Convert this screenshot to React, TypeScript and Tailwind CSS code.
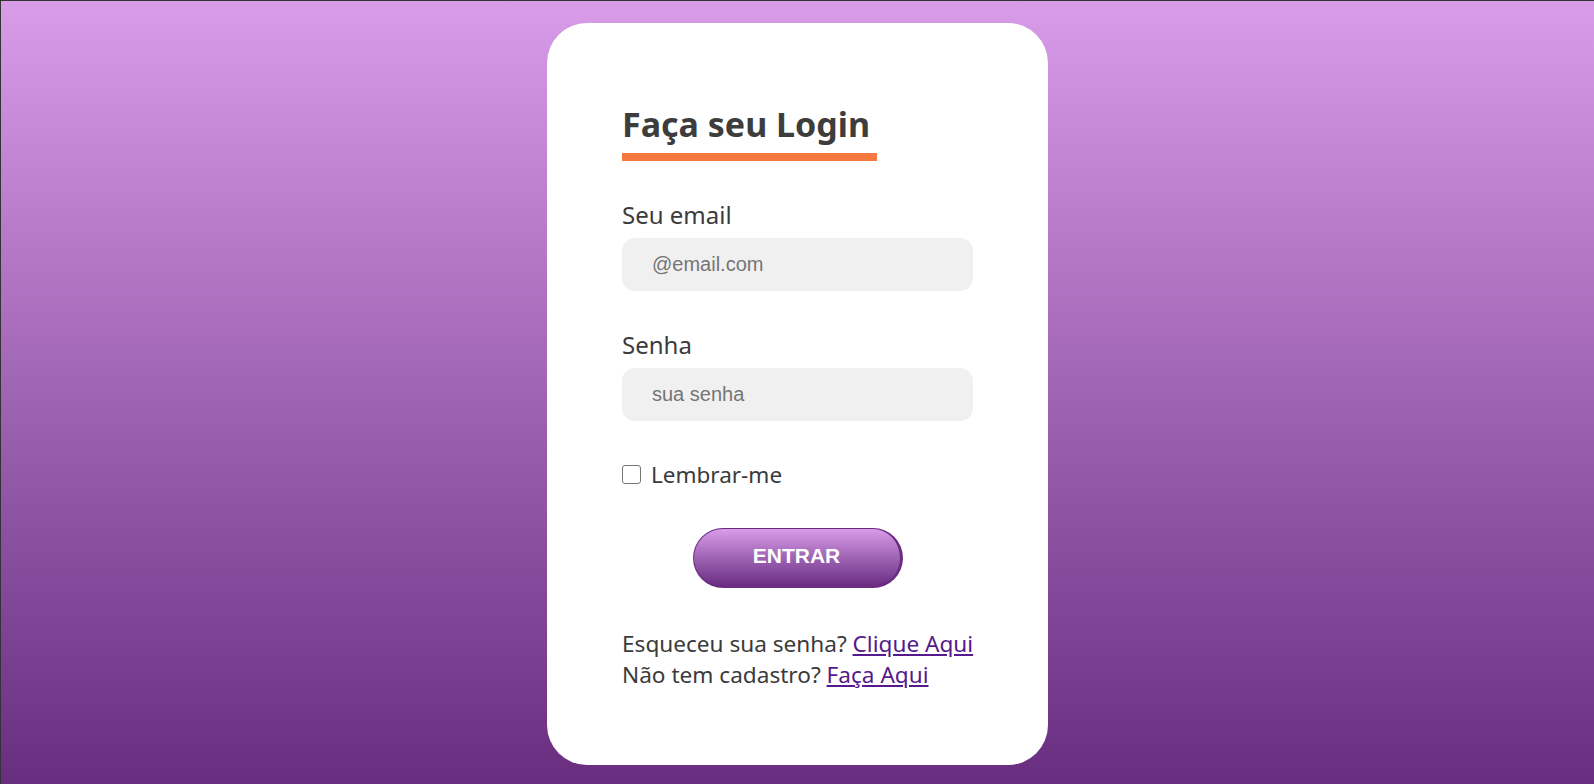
import { useState } from "react"

export default function App() {
  const [remember, setRemember] = useState(false)

  return (
    <div className="h-[784px] w-full overflow-hidden border-t border-l border-[#333] bg-linear-to-b from-[#d99ce9] to-[#692d80] flex justify-center pt-[22px] font-['Noto_Sans',sans-serif] text-[#3b3b3b]">
      <div className="w-[501px] h-[742px] bg-white rounded-[40px] pt-[79px] px-[75px]">
        {/* Title */}
        <h1 className="text-[34px] font-bold leading-[44px] text-[#3d3d3d]">Faça seu Login</h1>
        <div className="mt-[7px] w-[255px] h-[8px] bg-[#f47840]"></div>

        {/* Email */}
        <label className="block mt-[38px] text-[24px] leading-[32px]">Seu email</label>
        <input
          type="email"
          placeholder="@email.com"
          className="mt-[7px] w-[351px] h-[53px] rounded-[13px] bg-[#f0f0f0] pl-[30px] outline-none font-['Liberation_Sans',Arial,sans-serif] text-[20px] placeholder:text-[#757575]"
        />

        {/* Password */}
        <label className="block mt-[38px] text-[24px] leading-[32px]">Senha</label>
        <input
          type="password"
          placeholder="sua senha"
          className="mt-[7px] w-[351px] h-[53px] rounded-[13px] bg-[#f0f0f0] pl-[30px] outline-none font-['Liberation_Sans',Arial,sans-serif] text-[20px] placeholder:text-[#757575]"
        />

        {/* Remember */}
        <label className="mt-[38px] flex items-center gap-[10px] text-[22.5px] leading-[32px]">
          <input
            type="checkbox"
            checked={remember}
            onChange={(e) => setRemember(e.target.checked)}
            className="appearance-none w-[19px] h-[19px] rounded-[3px] border-[1.5px] border-[#767676] bg-white shrink-0 -mt-[2px]"
          />
          Lembrar-me
        </label>

        {/* Button */}
        <div className="mt-[37px] w-[351px] flex justify-center">
          <button className="w-[210px] h-[60px] pb-[4px] rounded-full bg-linear-to-b from-[#d99ce9] to-[#6a2d82] border border-[#6a2d82] border-r-[3px] border-b-[2px] text-white font-bold text-[21px] font-['Liberation_Sans',Arial,sans-serif]">
            ENTRAR
          </button>
        </div>

        {/* Links */}
        <div className="mt-[40px] text-[22.6px] leading-[31px] whitespace-nowrap">
          <p>
            Esqueceu sua senha? <a href="#" className="text-[#551a8b] underline">Clique Aqui</a>
          </p>
          <p>
            Não tem cadastro? <a href="#" className="text-[#551a8b] underline">Faça Aqui</a>
          </p>
        </div>
      </div>
    </div>
  )
}
